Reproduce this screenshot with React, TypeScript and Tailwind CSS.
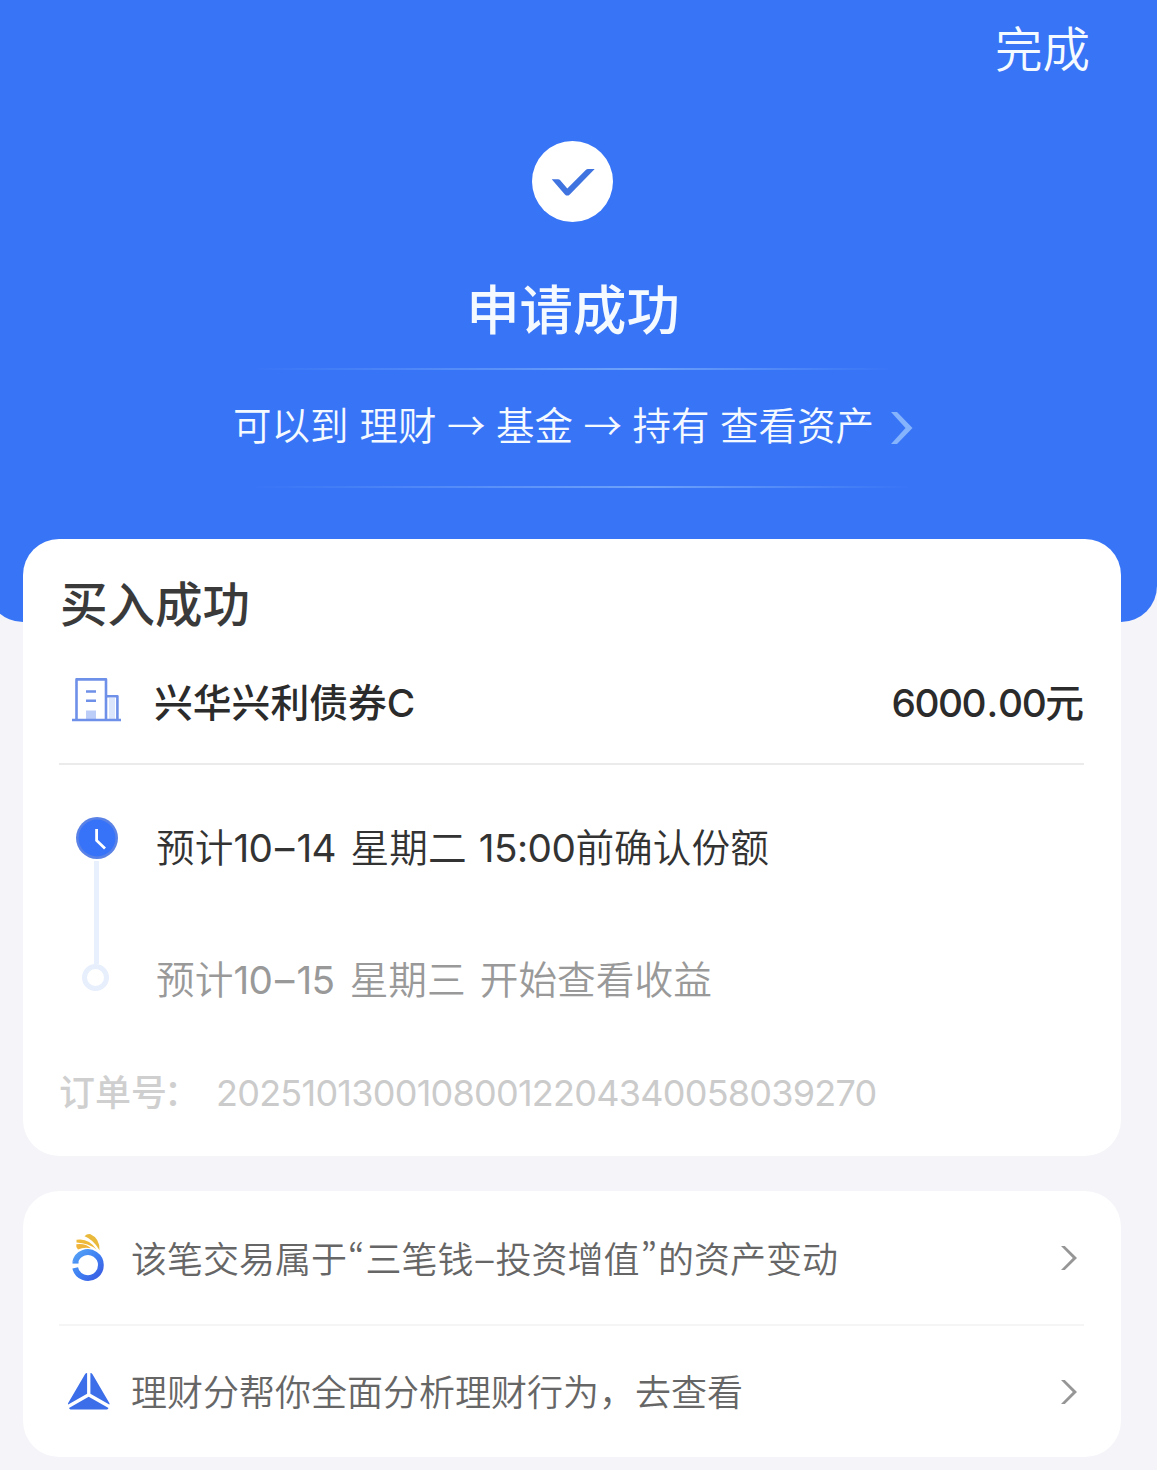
const links = [
  {
    icon: <PurseIcon />,
    text: (
      <>
        该笔交易属于<Quote>“</Quote>三笔钱<span className="mx-[2px]">–</span>投资增值<Quote>”</Quote>的资产变动
      </>
    ),
  },
  { icon: <ScoreIcon />, text: <>理财分帮你全面分析理财行为，去查看</> },
];

function Quote({ children }: { children: string }) {
  return (
    <span className="mx-[1px] font-['Noto_Sans_CJK_SC',sans-serif] [font-feature-settings:'pwid']">{children}</span>
  );
}

function CheckIcon() {
  return (
    <svg width="81" height="81" viewBox="0 0 81 81">
      <circle cx="40.5" cy="40.5" r="40.5" fill="#fff" />
      <path
        d="M19.7 38.2H26.2Q27.3 38.2 28 39L35.3 47.6L54 28.8Q54.9 28 56 28H62.7L37.8 53.4Q35.3 55.8 32.9 53.4Z"
        fill="#3f73e0"
      />
    </svg>
  );
}

function BuildingIcon() {
  return (
    <svg width="50" height="44" viewBox="0 0 50 44" fill="none" stroke="#6e90e8" strokeWidth="2.6">
      <path d="M37 20H43V41H37Z" fill="#dbe5fc" stroke="none" />
      <path d="M14 32.5H24V41H14Z" fill="#bccdf8" stroke="none" />
      <path d="M4.5 42V1.4H34V42" strokeLinejoin="round" />
      <path d="M34.2 18.2H45.4V42" strokeLinejoin="round" />
      <path d="M14 13.5H24M14 22.8H24" />
      <path d="M0 42H49" />
    </svg>
  );
}

function ClockIcon() {
  return (
    <svg width="42" height="42" viewBox="0 0 42 42" fill="none">
      <circle cx="21" cy="21" r="21" fill="#5a82e6" />
      <circle cx="21" cy="21" r="18.5" fill="#3673f8" />
      <path d="M20.6 12V23.5L29 31.5" stroke="#fff" strokeWidth="2.8" />
    </svg>
  );
}

function PurseIcon() {
  return (
    <svg width="44" height="50" viewBox="0 0 44 50" fill="none">
      <defs>
        <linearGradient id="ring" x1="6" y1="18" x2="34" y2="46" gradientUnits="userSpaceOnUse">
          <stop offset="0" stopColor="#56a4f5" />
          <stop offset="0.5" stopColor="#3f80f3" />
          <stop offset="1" stopColor="#3a58e0" />
        </linearGradient>
      </defs>
      <path d="M16.5 3.2Q19 .6 22.5 1.2Q32 5.5 31.5 17.2Q25.5 6.5 16.5 3.2Z" fill="#e9b93c" />
      <path d="M8.5 6.8Q20.5 4.5 28.5 16.5Q20.5 10 8.5 9.5Z" fill="#efb93a" />
      <path d="M8.3 11.2Q17.5 10 23 15.2Q15.5 14 10 16.5Q7.6 14.2 8.3 11.2Z" fill="#f0b43a" />
      <path d="M7.2 29.2A13 13 0 1 1 7.2 34.9" stroke="url(#ring)" strokeWidth="5.8" />
      <path d="M4.5 29.6H10.5" stroke="#4a93f5" strokeWidth="2" />
    </svg>
  );
}

function ScoreIcon() {
  return (
    <svg className="-ml-[1px]" width="44" height="40" viewBox="0 0 44 40" fill="#3b6ee8">
      <path d="M18 2.2Q18.7 1 20.1 1V21.8L1.2 32.6Q.6 32 1.2 31Z" />
      <path d="M23.4 1Q24.8 1 25.5 2.2L42.3 31Q42.9 32 42.3 32.6L23.4 21.8Z" />
      <path d="M21.7 24.8L41.5 36Q41 37.4 40 37.4H3.5Q2.5 37.4 2 36Z" />
    </svg>
  );
}

function Arrow() {
  return <span className="mx-[10.5px] -mt-[6px] font-['Noto_Sans_CJK_SC',sans-serif]">→</span>;
}

export default function App() {
  return (
    <div className="h-[1470px] w-[1157px] overflow-hidden bg-[#f4f4f9] font-['Inter','Noto_Sans_CJK_SC',sans-serif]">
      <header className="-ml-[13px] flex h-[622px] w-[1170px] flex-col items-center rounded-b-[36px] bg-[#3874f6] text-[#f4faff]">
        <div className="flex h-24 w-full items-center justify-end pt-[3px] pr-[67px] text-[47.5px] font-[350]">完成</div>
        <div className="mt-[45px]">
          <CheckIcon />
        </div>
        <h1 className="mt-[59px] pl-[2px] text-[53.4px] font-medium leading-[60px]">申请成功</h1>
        <div className="mt-[27px] h-[2px] w-[640px] bg-linear-to-r from-transparent from-0% via-[#6ea2fa] via-60% to-transparent" />
        <div className="flex h-[116px] items-center pb-[2px] pl-[2px] text-[38.5px] font-[350] whitespace-nowrap">
          <span>可以到</span>
          <span className="ml-[11px]">理财</span>
          <Arrow />
          <span>基金</span>
          <Arrow />
          <span>持有</span>
          <span className="ml-[10.5px]">查看资产</span>
          <svg className="mt-[2px] ml-[17px]" width="22" height="32" viewBox="0 0 22 32" fill="#86b4fc">
            <path d="M0 0H6L21.5 16L6 32H0L14.5 16Z" />
          </svg>
        </div>
        <div className="ml-[18px] h-[2px] w-[656px] bg-linear-to-r from-transparent from-0% via-[#6ea2fa] via-60% to-transparent" />
      </header>

      <section className="-mt-[83px] ml-[23px] h-[617px] w-[1098px] rounded-[36px] bg-white pr-[37px] pl-9">
        <h2 className="pt-[36px] pl-[1px] text-[47.5px] font-medium leading-[60px] text-[#3a3a3a]">买入成功</h2>

        <div className="mt-[4px] flex h-[126px] items-center border-b-2 border-[#ebebeb] pt-[4px] text-[38.8px] font-medium text-[#2b2b2b]">
          <div className="mb-[6px] ml-[13px] w-[82px]">
            <BuildingIcon />
          </div>
          <span>兴华兴利债券C</span>
          <span className="ml-auto">
            <span className="tracking-[-1.5px]">
              6000<span className="mx-[1.4px]">.</span>00
            </span>
            元
          </span>
        </div>

        <div className="mt-[52px] flex text-[38.7px] font-[350] leading-[60px]">
          <div className="ml-[17px] flex w-[42px] flex-col items-center">
            <ClockIcon />
            <div className="mt-[2px] mr-[1px] h-[103px] w-[5px] bg-[#e8f0fd]" />
            <div className="mr-[3px] size-[27px] rounded-full border-[5px] border-[#e7eefc]" />
          </div>
          <div className="ml-[38px] pt-[1px] whitespace-nowrap">
            <p className="text-[#333]">
              预计<span className="font-normal tracking-[-0.5px]">10<span className="mx-[2.5px]">–</span>14</span>
              <span className="ml-[14.5px]">星期二</span>
              <span className="ml-[12px] font-normal tracking-[-0.5px]">15:00</span>前确认份额
            </p>
            <p className="mt-[72px] text-[#999]">
              预计<span className="font-normal tracking-[-0.5px]">10<span className="mx-[2.5px]">–</span>15</span>
              <span className="ml-[15px]">星期三</span>
              <span className="ml-[14px]">开始查看收益</span>
            </p>
          </div>
        </div>

        <div className="mt-[53px] flex text-[36px] font-medium leading-[60px] text-[#cfcfcf]">
          <span className="w-[157px]">
            订单号<span className="-ml-[3px]">：</span>
          </span>
          <span className="font-normal tracking-[-0.75px] text-[#cbcbcb]">20251013001080012204340058039270</span>
        </div>
      </section>

      <section className="mt-[35px] ml-[23px] h-[266px] w-[1098px] rounded-[36px] bg-white pr-[37px] pl-9">
        {links.map((link, i) => (
          <div
            key={i}
            className="flex h-[135px] items-center border-[#f5f5f6] text-[36px] font-[350] text-[#666] first:border-b-2 last:h-[132px]"
          >
            <div className="ml-[9px] w-[63px]">{link.icon}</div>
            <span className="pt-[1px] whitespace-nowrap">{link.text}</span>
            <svg className="mr-[7px] ml-auto" width="16" height="24" viewBox="0 0 16 24" fill="#969696">
              <path d="M0 0H3.8L16 12L3.8 24H0L11.8 12Z" />
            </svg>
          </div>
        ))}
      </section>
    </div>
  );
}
